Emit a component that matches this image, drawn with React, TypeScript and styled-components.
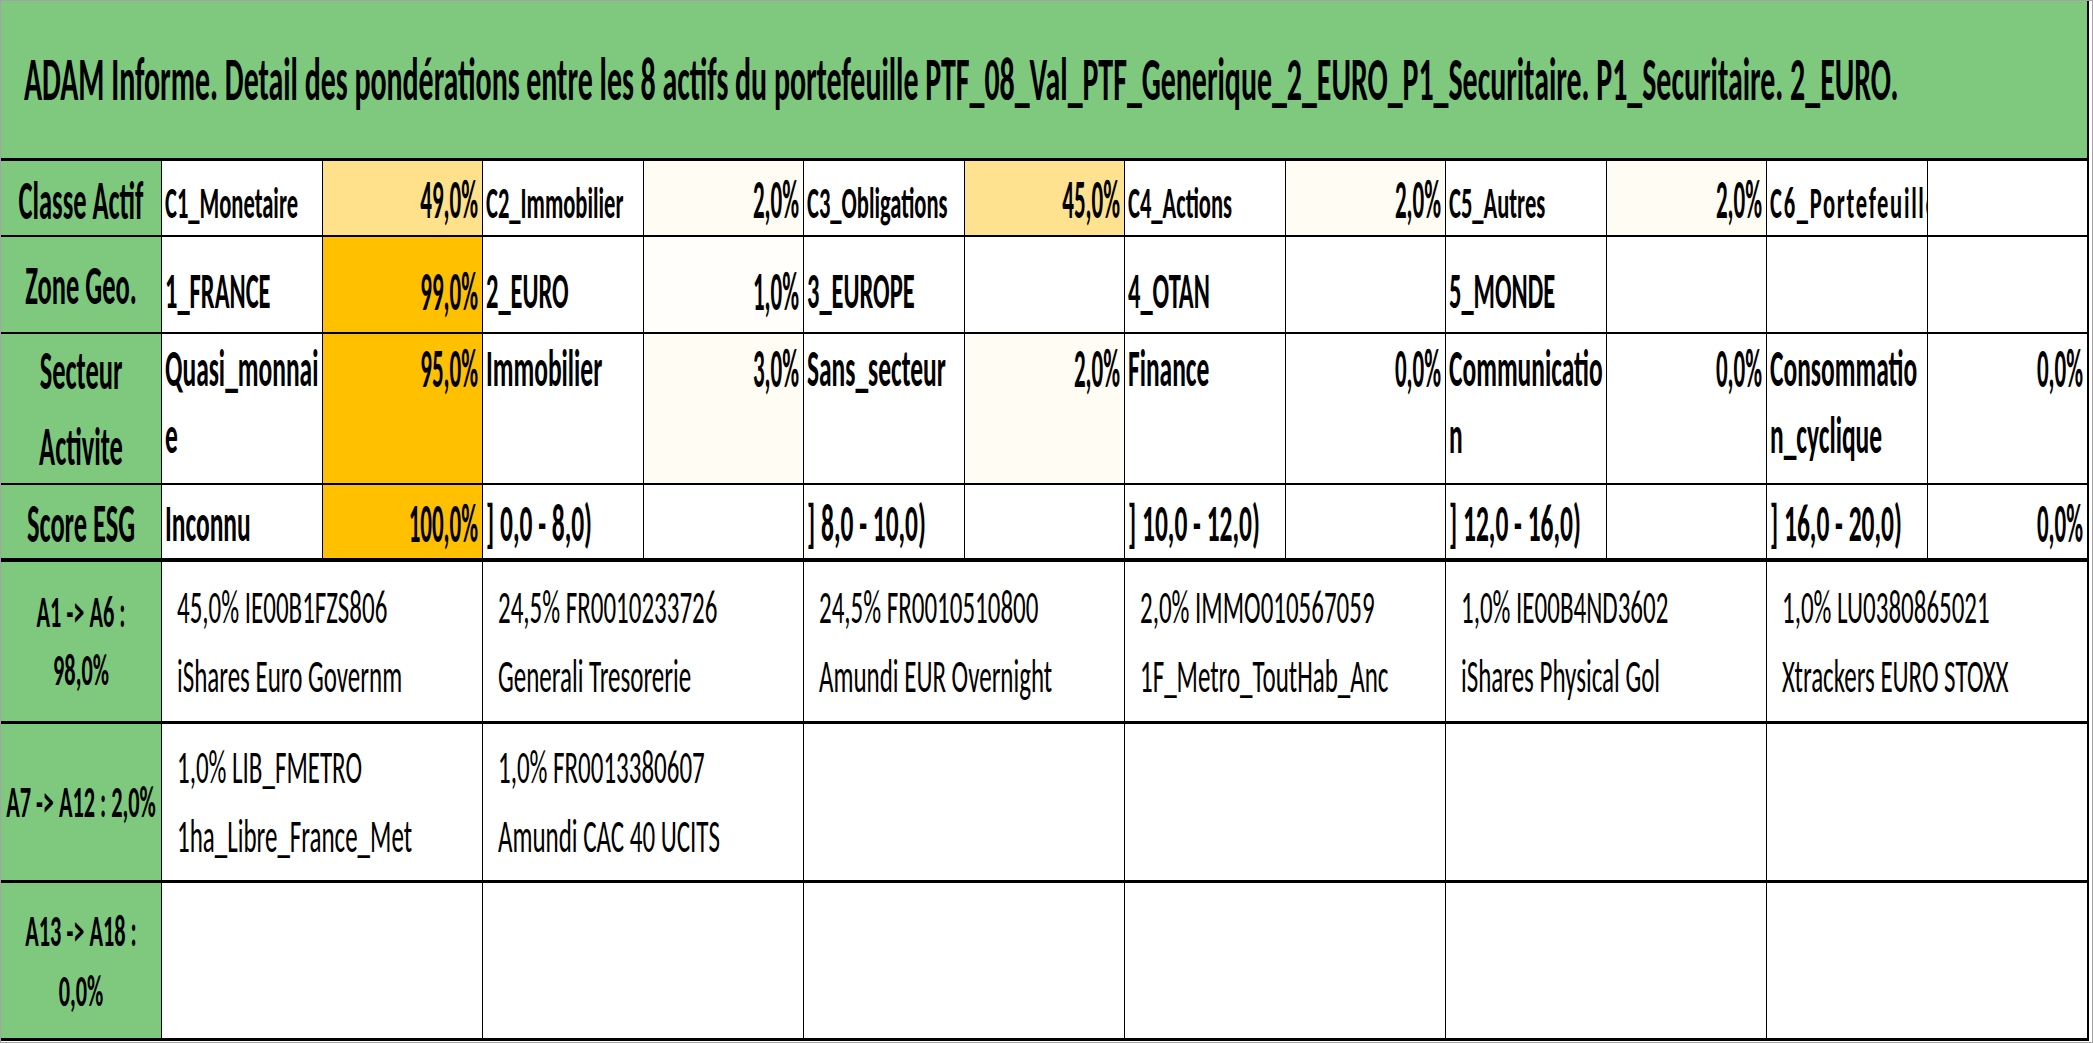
import React from 'react';
import styled, { createGlobalStyle } from 'styled-components';

/* The reference is a horizontally squeezed spreadsheet capture: glyphs are
   laid out at a small size (so every text keeps its real narrow width) and
   stretched vertically to the height seen in the picture. */
const SX = 0.49;
const FONT = `"Carlito", "Lato", "Liberation Sans", sans-serif`;
const GREEN = '#7FC97F';
const ORANGE = '#FFC000';
const GOLD = '#FFE08B';
const GOLD2 = '#FFE290';
const CREAM = '#FFFCF3';
const FAINT = '#FFFEFA';

const GlobalStyle = createGlobalStyle`
  *, *::before, *::after { box-sizing: border-box; }
  html, body { margin: 0; padding: 0; background: #ffffff; }
  body { font-family: ${FONT}; color: #000; }
`;

const Frame = styled.div`
  width: 2093px;
  height: 1043px;
  border: 1px solid #a3a3a3;
  background: #fff;
  overflow: hidden;
`;

const Sheet = styled.div`
  width: 2088px;
  border-right: 2px solid #000;
  display: flex;
  flex-direction: column;
`;

const TitleBar = styled.div`
  height: 160px;
  background: ${GREEN};
  border-bottom: 3px solid #000;
  display: flex;
  align-items: flex-start;
  padding: 50px 0 0 23px;
`;

type OriginY = 'top' | 'bottom' | 'center';

/* $size: size that sets the glyph widths; $vsize: size that sets their height;
   $lh: visual line height. */
const Txt = styled.span<{
  $size: number;
  $vsize?: number;
  $weight?: number;
  $lh?: number;
  $oy?: OriginY;
  $track?: number;
}>`
  display: inline-block;
  font-size: ${(p) => p.$size * SX}px;
  line-height: ${(p) => {
    const vs = p.$vsize ?? p.$size;
    const k = vs / (p.$size * SX);
    return (p.$lh ?? vs) / k;
  }}px;
  font-weight: ${(p) => p.$weight ?? 700};
  letter-spacing: ${(p) => p.$track ?? 0}px;
  white-space: nowrap;
  transform: scaleY(${(p) => (p.$vsize ?? p.$size) / (p.$size * SX)});
  transform-origin: center ${(p) => p.$oy ?? 'center'};
`;

const Row = styled.div<{ $cols: number; $h: number; $bb: number }>`
  display: grid;
  grid-template-columns: 160px repeat(${(p) => p.$cols}, minmax(0, 1fr));
  height: ${(p) => p.$h}px;
  border-bottom: ${(p) => p.$bb}px solid #000;
`;

const Cell = styled.div<{
  $bg?: string;
  $justify: string;
  $align: string;
  $pt?: number;
  $pb?: number;
  $pl?: number;
  $pr?: number;
}>`
  display: flex;
  justify-content: ${(p) => p.$justify};
  align-items: ${(p) => p.$align};
  padding: ${(p) => p.$pt ?? 0}px ${(p) => p.$pr ?? 4}px ${(p) => p.$pb ?? 0}px
    ${(p) => p.$pl ?? 3}px;
  background: ${(p) => p.$bg ?? '#ffffff'};
  border-left: 1px solid #000;
  overflow: hidden;
  min-width: 0;
`;

const LabelCell = styled.div<{ $align: string; $pt?: number; $pb?: number }>`
  display: flex;
  justify-content: center;
  align-items: ${(p) => p.$align};
  padding: ${(p) => p.$pt ?? 0}px 0 ${(p) => p.$pb ?? 0}px;
  background: ${GREEN};
  text-align: center;
  overflow: hidden;
  min-width: 0;
`;

type Slot = { size: number; vsize?: number; lh?: number; pt?: number; pb?: number };

type DataCell = { lines?: string[]; value?: boolean; bg?: string; track?: number };

interface SummaryRow {
  label: string[];
  labelSlot: Slot;
  h: number;
  bb: number;
  align: 'flex-start' | 'flex-end';
  nameSlot: Slot;
  valueSlot: Slot;
  cells: DataCell[];
}

const n = (...lines: string[]): DataCell => ({ lines });
const v = (text: string, bg?: string): DataCell => ({ lines: [text], value: true, bg });
const empty = (bg?: string): DataCell => ({ bg });

const LABEL_SIZE = 54;
const VALUE_W = 47;
const VALUE_H = 54;

const summaryRows: SummaryRow[] = [
  {
    label: ['Classe Actif'],
    labelSlot: { size: LABEL_SIZE, pb: 7 },
    h: 76,
    bb: 2,
    align: 'flex-end',
    nameSlot: { size: 46, vsize: 44, pb: 8 },
    valueSlot: { size: VALUE_W, vsize: VALUE_H, pb: 8 },
    cells: [
      n('C1_Monetaire'),
      v('49,0%', GOLD),
      n('C2_Immobilier'),
      v('2,0%', CREAM),
      n('C3_Obligations'),
      v('45,0%', GOLD2),
      n('C4_Actions'),
      v('2,0%', CREAM),
      n('C5_Autres'),
      v('2,0%', CREAM),
      { lines: ['C6_Portefeuille'], track: 1.7 },
      empty(),
    ],
  },
  {
    label: ['Zone Geo.'],
    labelSlot: { size: LABEL_SIZE, pb: 19 },
    h: 97,
    bb: 2,
    align: 'flex-end',
    nameSlot: { size: 50, pb: 14.5 },
    valueSlot: { size: VALUE_W, vsize: VALUE_H, pb: 12.5 },
    cells: [
      n('1_FRANCE'),
      v('99,0%', ORANGE),
      n('2_EURO'),
      v('1,0%', FAINT),
      n('3_EUROPE'),
      empty(),
      n('4_OTAN'),
      empty(),
      n('5_MONDE'),
      empty(),
      empty(),
      empty(),
    ],
  },
  {
    label: ['Secteur', 'Activite'],
    labelSlot: { size: LABEL_SIZE, lh: 75, pt: 0 },
    h: 151,
    bb: 2,
    align: 'flex-start',
    nameSlot: { size: 52, lh: 67, pt: 3 },
    valueSlot: { size: VALUE_W, vsize: VALUE_H, pt: 8 },
    cells: [
      n('Quasi_monnai', 'e'),
      v('95,0%', ORANGE),
      n('Immobilier'),
      v('3,0%', CREAM),
      n('Sans_secteur'),
      v('2,0%', CREAM),
      n('Finance'),
      v('0,0%'),
      n('Communicatio', 'n'),
      v('0,0%'),
      n('Consommatio', 'n_cyclique'),
      v('0,0%'),
    ],
  },
  {
    label: ['Score ESG'],
    labelSlot: { size: LABEL_SIZE, pb: 6.5 },
    h: 77,
    bb: 4,
    align: 'flex-end',
    nameSlot: { size: 52, vsize: 53, pb: 7.5 },
    valueSlot: { size: VALUE_W, vsize: VALUE_H, pb: 6.5 },
    cells: [
      n('Inconnu'),
      v('100,0%', ORANGE),
      n('] 0,0 - 8,0)'),
      empty(),
      n('] 8,0 - 10,0)'),
      empty(),
      n('] 10,0 - 12,0)'),
      empty(),
      n('] 12,0 - 16,0)'),
      empty(),
      n('] 16,0 - 20,0)'),
      v('0,0%'),
    ],
  },
];

interface AssetRow {
  label: string[];
  labelLh: number;
  labelPt: number;
  h: number;
  pt: number;
  assets: string[][];
}

const assetRows: AssetRow[] = [
  {
    label: ['A1 -> A6 :', '98,0%'],
    labelLh: 57,
    labelPt: 23.5,
    h: 162,
    pt: 11,
    assets: [
      ['45,0% IE00B1FZS806', 'iShares Euro Governm'],
      ['24,5% FR0010233726', 'Generali Tresorerie'],
      ['24,5% FR0010510800', 'Amundi EUR Overnight'],
      ['2,0% IMMO010567059', '1F_Metro_ToutHab_Anc'],
      ['1,0% IE00B4ND3602', 'iShares Physical Gol'],
      ['1,0% LU0380865021', 'Xtrackers EURO STOXX'],
    ],
  },
  {
    label: ['A7 -> A12 : 2,0%'],
    labelLh: 45,
    labelPt: 57,
    h: 159,
    pt: 9,
    assets: [
      ['1,0% LIB_FMETRO', '1ha_Libre_France_Met'],
      ['1,0% FR0013380607', 'Amundi CAC 40 UCITS'],
      [],
      [],
      [],
      [],
    ],
  },
  {
    label: ['A13 -> A18 :', '0,0%'],
    labelLh: 60,
    labelPt: 20,
    h: 158,
    pt: 9,
    assets: [[], [], [], [], [], []],
  },
];

const Lines: React.FC<{ lines: string[] }> = ({ lines }) => (
  <>
    {lines.map((l, i) => (
      <React.Fragment key={i}>
        {i > 0 && <br />}
        {l}
      </React.Fragment>
    ))}
  </>
);

const SummaryTable: React.FC<{ row: SummaryRow }> = ({ row }) => {
  const oy: OriginY = row.align === 'flex-start' ? 'top' : 'bottom';
  const ls = row.labelSlot;
  return (
    <Row $cols={12} $h={row.h} $bb={row.bb}>
      <LabelCell $align={row.align} $pt={ls.pt} $pb={ls.pb}>
        <Txt $size={ls.size} $lh={ls.lh} $oy={oy}>
          <Lines lines={row.label} />
        </Txt>
      </LabelCell>
      {row.cells.map((c, i) => {
        const slot = c.value ? row.valueSlot : row.nameSlot;
        return (
          <Cell
            key={i}
            $bg={c.bg}
            $justify={c.value ? 'flex-end' : 'flex-start'}
            $align={row.align}
            $pt={slot.pt}
            $pb={slot.pb}
            $pr={c.value ? 4 : 0}
          >
            {c.lines && (
              <Txt
                $size={slot.size}
                $vsize={slot.vsize}
                $lh={slot.lh}
                $oy={oy}
                $track={c.track}
              >
                <Lines lines={c.lines} />
              </Txt>
            )}
          </Cell>
        );
      })}
    </Row>
  );
};

const AssetTable: React.FC<{ row: AssetRow }> = ({ row }) => (
  <Row $cols={6} $h={row.h} $bb={3}>
    <LabelCell $align="flex-start" $pt={row.labelPt}>
      <Txt $size={45.5} $vsize={44} $lh={row.labelLh} $oy="top">
        <Lines lines={row.label} />
      </Txt>
    </LabelCell>
    {row.assets.map((a, i) => (
      <Cell key={i} $justify="flex-start" $align="flex-start" $pt={row.pt} $pl={15} $pr={0}>
        {a.length > 0 && (
          <Txt $size={51} $vsize={48} $weight={400} $lh={69} $oy="top">
            <Lines lines={a} />
          </Txt>
        )}
      </Cell>
    ))}
  </Row>
);

export default function App() {
  return (
    <>
      <GlobalStyle />
      <Frame>
        <Sheet>
          <TitleBar>
            <Txt $size={61} $oy="top">
              ADAM Informe. Detail des pondérations entre les 8 actifs du portefeuille
              PTF_08_Val_PTF_Generique_2_EURO_P1_Securitaire. P1_Securitaire. 2_EURO.
            </Txt>
          </TitleBar>
          {summaryRows.map((r, i) => (
            <SummaryTable key={`s${i}`} row={r} />
          ))}
          {assetRows.map((r, i) => (
            <AssetTable key={`a${i}`} row={r} />
          ))}
        </Sheet>
      </Frame>
    </>
  );
}
